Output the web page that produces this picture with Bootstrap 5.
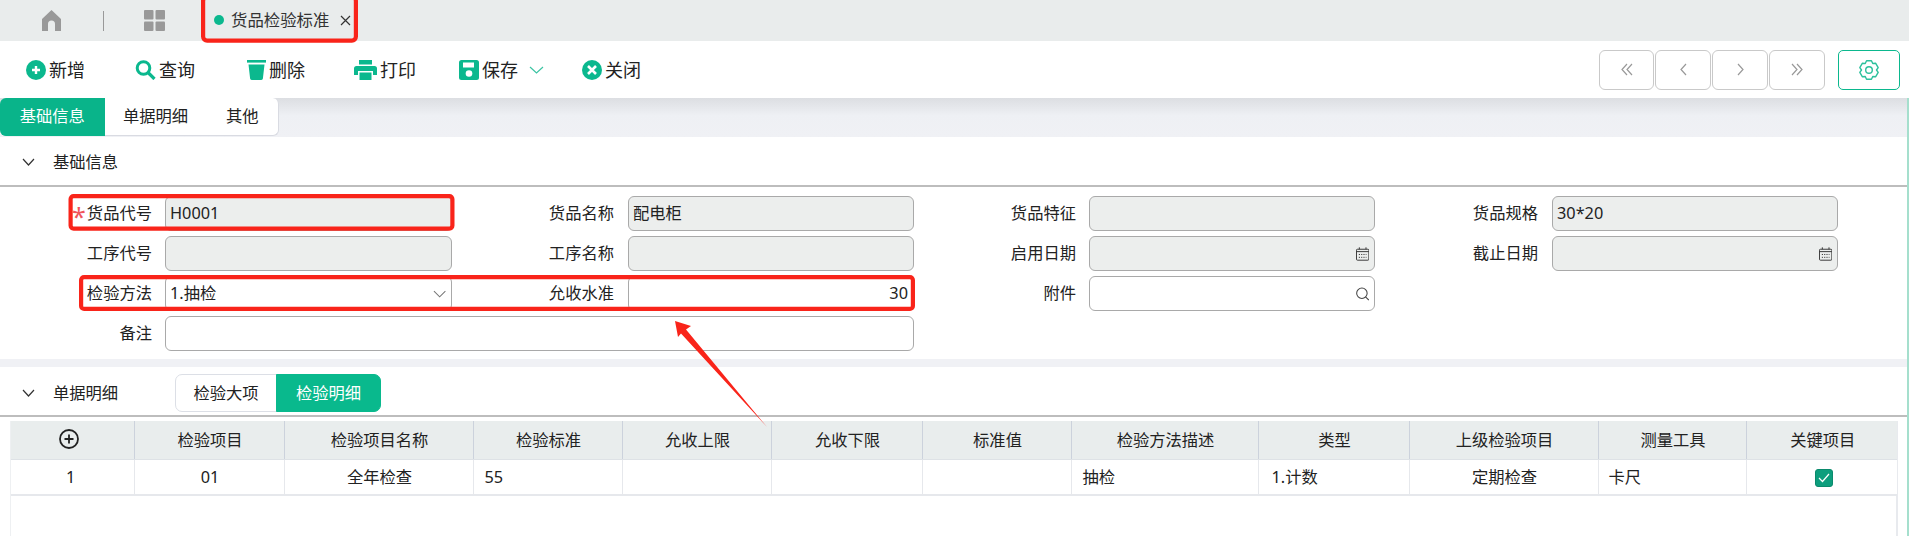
<!DOCTYPE html>
<html lang="zh-CN">
<head>
<meta charset="utf-8">
<title>货品检验标准</title>
<link rel="stylesheet" href="https://cdn.jsdelivr.net/npm/bootstrap@5.3.0/dist/css/bootstrap.min.css">
<style>
html,body{height:536px;overflow:hidden}
body{width:1909px;background:#fff;color:#222;font-family:"Noto Sans","Noto Sans CJK SC",sans-serif;font-size:16.3px;position:relative}
.topbar{height:41px;background:#e9ecec;padding-left:42px}
.topdiv{width:1px;height:20px;background:#999;margin:0 40px 0 42px}
.doc-tab{margin-left:49px;font-size:16.4px;color:#333}
.doc-dot{width:10px;height:10px;border-radius:50%;background:#0bb88e;margin-right:7px}
.doc-x{margin-left:11px}
.toolbar{height:57px;padding-left:26px;padding-right:9px}
.tool{padding:0;border:0;font-size:18px;color:#222;display:flex;align-items:center;gap:3px;line-height:1}
.tool:nth-child(1){width:109px}.tool:nth-child(2){width:112px}.tool:nth-child(3){width:107px}.tool:nth-child(4){width:105px}.tool:nth-child(5){width:123px}.tool:nth-child(6){width:70px}
.toolbar .btn:active{border-color:transparent}
.pager{gap:1px}
.pgbtn{width:56px;height:40px;padding:0;border:1px solid #c9c9c9;border-radius:6px;display:flex;align-items:center;justify-content:center;background:#fff}
.pgbtn:first-child{width:55px}
.cfgbtn{width:62px;height:40px;margin-left:13px;padding:0;border:1px solid #0bb88e;border-radius:5px;display:flex;align-items:center;justify-content:center;background:#fff}
.main{height:438px;border-right:2px solid #a5dfcd;position:relative}
.tabstrip{height:39px;background:linear-gradient(#dcdee2,#eef0f4 45%,#f0f1f5)}
.tabs{height:38px;width:279px}
.tb{flex:0 0 auto;padding:0;font-size:16.3px;color:#222;background:#fff;border:1px solid #d9dbe2;border-width:0 1px 1px 0;border-radius:0;display:flex;align-items:center;justify-content:center}
.tb.w1{width:105px}.tb.w2{width:102px}.tb.w3{width:72px;border-radius:0 6px 6px 0}
.tb.on{background:#09b48a;color:#fff;border-color:#09b48a;border-radius:6px 0 0 6px}
.sechead{height:50px;padding:2px 0 0 22px;border-bottom:2px solid #bdbdbd}
.sechead .sectitle{margin-left:18px}
.formwrap{padding:9px 0 8px;display:grid;grid-template-columns:165px 287px 176px 286px 175px 286px 177px 286px;grid-auto-rows:35px;row-gap:5px}
.flabel{display:flex;align-items:center;justify-content:flex-end;padding-right:13px;margin:0;white-space:nowrap;position:relative}
.flabel.far{padding-right:14px}
.req{color:#f0555b;font-size:25px;line-height:1;height:20px;margin-right:1px}
.fbox{display:flex;align-items:center;height:35px;border:1px solid #a9a9a9;border-radius:6px;background:#fff;overflow:hidden;padding-right:5px}
.fbox.dis{background:#eceeed}
.fbox .form-control,.fbox .form-select{flex:1 1 auto;min-width:0;height:33px;padding:0 0 0 4px;border:0;border-radius:0;background-color:transparent;background-image:none;box-shadow:none;font-size:16.3px;color:#222;font-family:inherit;line-height:33px}
.fbox .form-control[readonly]{background:transparent}
.fspan{grid-column:2 / span 3}
.fnew{grid-column:1}
.gapband{height:8px;background:#f0f1f5}
.sechead2{height:50px;padding:4px 0 0 22px;border-bottom:2px solid #bdbdbd}
.sechead2 .sectitle{margin-left:18px;width:62px}
.seg{margin-left:60px;height:38px}
.sg{width:102px;flex:0 0 auto;padding:0;font-size:16.3px;border:1px solid #dcdfe6;color:#222;background:#fff;border-radius:7px 0 0 7px;display:flex;align-items:center;justify-content:center}
.sg.on{width:105px;background:#09b98d;border-color:#09b98d;color:#fff;border-radius:0 7px 7px 0}
.gridwrap{margin:4px 0 0 10px;width:1888px;height:calc(536px - 421px);border-left:1px solid #eef0f2;border-right:2px solid #e8eaee}
.gridtbl{table-layout:fixed;width:1886px;margin:0;border-collapse:collapse;font-size:16.3px;color:#222}
.gridtbl th{height:38px;padding:0 0 0 2px;background:#e9eded;font-weight:400;text-align:center;border-right:1px solid #ccd2dc;vertical-align:middle;color:#222;box-shadow:none}
.gridtbl td{height:36px;padding:0 0 0 2px;text-align:center;border-right:1px solid #e6e8ec;border-bottom:2px solid #e6e8ec;vertical-align:middle;color:#222;background:#fff;box-shadow:none}
.gridtbl th:last-child,.gridtbl td:last-child{border-right:0}
.gridtbl td.tl{text-align:left;padding-left:11px}
.gridtbl td.tl.wide{padding-left:13px}
.gridtbl td.tl.tight{padding-left:10px}
.gridtbl .idx{padding-right:5px}
.gridtbl .addcell svg{margin-right:8px}
.gridtbl td.ckcell{padding-left:4px}
.c1{width:123px}.c2{width:150px}.c3{width:189px}.c4{width:149px}.c5{width:149px}.c6{width:151px}.c7{width:149px}.c8{width:187px}.c9{width:151px}.c10{width:189px}.c11{width:148px}.c12{width:151px}
.chk{width:18px;height:18px;border-radius:3px;background:#0d9e7d;border:1px solid #0a8a6c;display:inline-flex;align-items:center;justify-content:center;vertical-align:middle}
.annot{position:absolute;left:0;top:0;width:1909px;height:536px;pointer-events:none}
</style>
</head>
<body>

<div class="topbar d-flex align-items-center">
  <svg width="19" height="21" viewBox="0 0 19 21"><path fill="#999" d="M9.5 0 19 9v12h-6v-7a3.5 3.5 0 0 0-7 0v7H0V9Z"/></svg>
  <span class="topdiv"></span>
  <svg width="21" height="21" viewBox="0 0 21 21" fill="#999"><rect width="9.5" height="9.5" rx="1"/><rect x="11.5" width="9.5" height="9.5" rx="1"/><rect y="11.5" width="9.5" height="9.5" rx="1"/><rect x="11.5" y="11.5" width="9.5" height="9.5" rx="1"/></svg>
  <div class="doc-tab d-flex align-items-center">
    <span class="doc-dot"></span><span>货品检验标准</span>
    <svg class="doc-x" width="11" height="11" viewBox="0 0 11 11" stroke="#333" stroke-width="1.2"><path d="M1 1l9 9M10 1l-9 9"/></svg>
  </div>
</div>

<div class="toolbar d-flex align-items-center">
  <div class="d-flex align-items-center flex-grow-1">
    <button class="btn tool"><svg width="20" height="20" viewBox="0 0 20 20"><circle cx="10" cy="10" r="10" fill="#0bb88e"/><path d="M10 6v8M6 10h8" stroke="#fff" stroke-width="2.4"/></svg>新增</button>
    <button class="btn tool"><svg width="21" height="20" viewBox="0 0 21 20" fill="none" stroke="#0bb88e"><circle cx="8.5" cy="8" r="6.3" stroke-width="3"/><path d="M13 12.5l6.5 6.5" stroke-width="3.2"/></svg>查询</button>
    <button class="btn tool"><svg width="19" height="20" viewBox="0 0 19 20" fill="#0bb88e"><rect width="19" height="2.6"/><path d="M1.5 4.5h16l-1.6 14a1.6 1.6 0 0 1-1.6 1.5H4.7a1.6 1.6 0 0 1-1.6-1.5Z"/></svg>删除</button>
    <button class="btn tool"><svg width="23" height="20" viewBox="0 0 23 20" fill="#0bb88e"><path d="M5 0h13v4.5H5Z"/><path d="M2.5 6h18A2.5 2.5 0 0 1 23 8.500V15h-4v-4H4v4H0V8.500A2.500 2.500 0 0 1 2.500 6Z"/><path d="M5.500 12.500h12V20h-12Z"/></svg>打印</button>
    <button class="btn tool"><svg width="20" height="20" viewBox="0 0 20 20"><rect width="20" height="20" rx="2.500" fill="#0bb88e"/><rect x="4" y="2.500" width="11" height="5" fill="#fff"/><circle cx="10" cy="13.500" r="3.300" fill="#fff"/></svg>保存<svg class="ms-2" width="15" height="8" viewBox="0 0 15 8" fill="none" stroke="#3cc4a3" stroke-width="1.200"><path d="M1 1l6.500 6L14 1"/></svg></button>
    <button class="btn tool"><svg width="20" height="20" viewBox="0 0 20 20"><circle cx="10" cy="10" r="10" fill="#0bb88e"/><path d="M6 6l8 8M14 6l-8 8" stroke="#fff" stroke-width="2.600"/></svg>关闭</button>
  </div>
  <div class="d-flex pager">
    <button class="btn pgbtn" aria-label="first"><svg width="12" height="13" viewBox="0 0 12 13" fill="none" stroke="#999" stroke-width="1.200"><path d="M6 1 1 6.500 6 12M11 1 6 6.500 11 12"/></svg></button>
    <button class="btn pgbtn" aria-label="prev"><svg width="7" height="13" viewBox="0 0 7 13" fill="none" stroke="#999" stroke-width="1.200"><path d="M6 1 1 6.500 6 12"/></svg></button>
    <button class="btn pgbtn" aria-label="next"><svg width="7" height="13" viewBox="0 0 7 13" fill="none" stroke="#999" stroke-width="1.200"><path d="M1 1l5 5.500L1 12"/></svg></button>
    <button class="btn pgbtn" aria-label="last"><svg width="12" height="13" viewBox="0 0 12 13" fill="none" stroke="#999" stroke-width="1.200"><path d="M1 1l5 5.500L1 12M6 1l5 5.500L6 12"/></svg></button>
  </div>
  <button class="btn cfgbtn" aria-label="settings"><svg width="20" height="20" viewBox="0 0 20 20" fill="none" stroke="#2cc09c" stroke-width="1.400" stroke-linejoin="round"><path d="M7.540.82h4.920l1.290 2.680 2.970-.22 2.460 4.260L17.500 10l1.680 2.460-2.460 4.260-2.970-.22-1.290 2.680H7.540L6.250 16.500l-2.970.22-2.460-4.260L2.500 10 .82 7.540l2.460-4.260 2.970.22Z"/><circle cx="10" cy="10" r="3.300"/></svg></button>
</div>

<div class="main">
  <div class="tabstrip">
    <div class="btn-group tabs d-flex" role="group">
      <button class="btn tb w1 on">基础信息</button>
      <button class="btn tb w2">单据明细</button>
      <button class="btn tb w3">其他</button>
    </div>
  </div>

  <div class="sechead d-flex align-items-center">
    <svg width="13" height="8" viewBox="0 0 13 8" fill="none" stroke="#333" stroke-width="1.200"><path d="M1 1l5.500 6L12 1"/></svg>
    <span class="sectitle">基础信息</span>
  </div>

  <div class="formwrap">
    <label class="flabel"><span class="req">*</span>货品代号</label>
    <div class="fbox dis"><input class="form-control" readonly value="H0001"></div>
    <label class="flabel far">货品名称</label>
    <div class="fbox dis"><input class="form-control" readonly value="配电柜"></div>
    <label class="flabel">货品特征</label>
    <div class="fbox dis"><input class="form-control" readonly value=""></div>
    <label class="flabel far">货品规格</label>
    <div class="fbox dis"><input class="form-control" readonly value="30*20"></div>

    <label class="flabel">工序代号</label>
    <div class="fbox dis"><input class="form-control" readonly value=""></div>
    <label class="flabel far">工序名称</label>
    <div class="fbox dis"><input class="form-control" readonly value=""></div>
    <label class="flabel">启用日期</label>
    <div class="fbox dis"><input class="form-control" readonly value=""><svg width="14" height="14" viewBox="0 0 14 14" fill="none" stroke="#333"><rect x=".5" y="2" width="13" height="11.500" rx="1"/><path d="M.5 4.500h13M3.500 0v2M10.500 0v2"/><path d="M3 7.500h8M3 10.500h8" stroke-dasharray="1.200 1.200"/></svg></div>
    <label class="flabel far">截止日期</label>
    <div class="fbox dis"><input class="form-control" readonly value=""><svg width="14" height="14" viewBox="0 0 14 14" fill="none" stroke="#333"><rect x=".5" y="2" width="13" height="11.500" rx="1"/><path d="M.5 4.500h13M3.500 0v2M10.500 0v2"/><path d="M3 7.500h8M3 10.500h8" stroke-dasharray="1.200 1.200"/></svg></div>

    <label class="flabel">检验方法</label>
    <div class="fbox"><select class="form-select"><option>1.抽检</option></select><svg width="14" height="8" viewBox="0 0 14 8" fill="none" stroke="#777" stroke-width="1.100"><path d="M1 1l6 6 6-6"/></svg></div>
    <label class="flabel far">允收水准</label>
    <div class="fbox"><input class="form-control text-end" value="30"></div>
    <label class="flabel">附件</label>
    <div class="fbox"><input class="form-control" value=""><svg width="14" height="14" viewBox="0 0 14 14" fill="none" stroke="#444" stroke-width="1.100"><circle cx="6.200" cy="6.200" r="5.500"/><path d="M10 10l3.500 3.500"/></svg></div>

    <label class="flabel fnew">备注</label>
    <div class="fbox fspan"><input class="form-control" value=""></div>
  </div>

  <div class="gapband"></div>

  <div class="sechead2 d-flex align-items-center">
    <svg width="13" height="8" viewBox="0 0 13 8" fill="none" stroke="#333" stroke-width="1.200"><path d="M1 1l5.500 6L12 1"/></svg>
    <span class="sectitle flex-shrink-0 text-nowrap">单据明细</span>
    <div class="btn-group seg" role="group">
      <button class="btn sg">检验大项</button>
      <button class="btn sg on">检验明细</button>
    </div>
  </div>

  <div class="gridwrap">
    <table class="table gridtbl">
      <colgroup><col class="c1"><col class="c2"><col class="c3"><col class="c4"><col class="c5"><col class="c6"><col class="c7"><col class="c8"><col class="c9"><col class="c10"><col class="c11"><col class="c12"></colgroup>
      <thead><tr>
        <th class="addcell"><svg width="20" height="20" viewBox="0 0 20 20" fill="none" stroke="#222" class="mb-1"><circle cx="10" cy="10" r="9" stroke-width="1.800"/><path d="M10 5.500v9M5.500 10h9" stroke-width="1.800"/></svg></th>
        <th>检验项目</th><th>检验项目名称</th><th>检验标准</th><th>允收上限</th><th>允收下限</th><th>标准值</th><th>检验方法描述</th><th>类型</th><th>上级检验项目</th><th>测量工具</th><th>关键项目</th>
      </tr></thead>
      <tbody><tr>
        <td class="idx">1</td><td>01</td><td>全年检查</td><td class="tl">55</td><td></td><td></td><td></td><td class="tl">抽检</td><td class="tl wide">1.计数</td><td>定期检查</td><td class="tl tight">卡尺</td>
        <td class="ckcell"><span class="chk"><svg width="12" height="10" viewBox="0 0 12 10" fill="none" stroke="#fff" stroke-width="1.200"><path d="M1 5l3.500 3.500L11 1"/></svg></span></td>
      </tr></tbody>
    </table>
  </div>
</div>

<svg class="annot" viewBox="0 0 1909 536" fill="none" stroke="#f9241a" stroke-width="4.200">
  <rect x="203.100" y="-3" width="152.800" height="43.600" rx="4"/>
  <rect x="70.600" y="196.100" width="381.800" height="32.500" rx="3"/>
  <rect x="81.100" y="277.100" width="831.800" height="31.800" rx="3"/>
  <path stroke="none" fill="#f9241a" d="M675 321 691 326 686 329.500 767 427 681 333.500 678 337Z"/>
</svg>

</body>
</html>
